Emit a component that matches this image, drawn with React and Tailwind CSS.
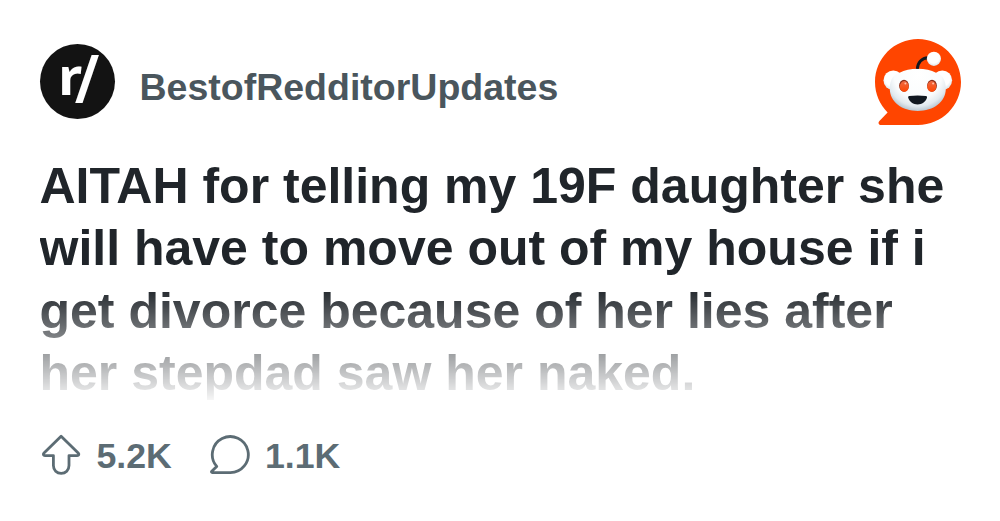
import React from "react";

const post = {
  community: "BestofRedditorUpdates",
  lines: [
    "AITAH for telling my 19F daughter she",
    "will have to move out of my house if i",
    "get divorce because of her lies after",
    "her stepdad saw her naked.",
  ],
  votes: "5.2K",
  comments: "1.1K",
};

const CommunityIcon = () => (
  <svg className="w-[75px] h-[75px] shrink-0 overflow-visible" viewBox="0 0 75 75">
    <circle cx="37.5" cy="37.5" r="37.5" fill="#131313" />
    <g fill="#fff" className="font-['Noto_Sans',sans-serif]">
      <text
        fontSize="50.5"
        fontWeight="700"
        transform="translate(18.2 51) scale(1.06 1)"
      >
        r
      </text>
      <text
        fontSize="67"
        fontWeight="600"
        transform="translate(34.8 58.8) scale(.92 1)"
      >
        /
      </text>
    </g>
  </svg>
);

const RedditLogo = () => (
  <svg className="w-[86px] h-[86px] shrink-0" viewBox="0 0 86 86">
    <defs>
      <radialGradient
        id="head"
        gradientUnits="userSpaceOnUse"
        cx="42.8"
        cy="36"
        r="38"
      >
        <stop offset="0" stopColor="#fff" />
        <stop offset=".62" stopColor="#fafcfd" />
        <stop offset=".82" stopColor="#e2eaef" />
        <stop offset="1" stopColor="#a9b9c5" />
      </radialGradient>
      <radialGradient id="ball" cx=".48" cy=".4" r=".62">
        <stop offset=".65" stopColor="#fff" />
        <stop offset="1" stopColor="#d6e1e7" />
      </radialGradient>
      <linearGradient id="eye" x1="0" y1="0" x2="0" y2="1">
        <stop offset="0" stopColor="#f06a42" />
        <stop offset="1" stopColor="#ff4500" />
      </linearGradient>
    </defs>
    <path
      d="M43 0C66.7 0 86 19.3 86 43S66.7 86 43 86H5.8C3.6 86 2.8 83.6 4.4 82L12.6 73.4C4.8 65.6 0 54.9 0 43 0 19.3 19.3 0 43 0Z"
      fill="#ff4500"
    />
    <circle cx="18.3" cy="41.2" r="9.8" fill="url(#ball)" />
    <circle cx="67.3" cy="41.2" r="9.8" fill="url(#ball)" />
    <path
      d="M42.8 29.8C35.5 29.8 29.5 31.2 24.6 33.8C20 34.5 14.5 40 14.8 49.8C14.8 63 27 72 42.8 72S70.8 63 70.8 49.8C71.1 40 65.6 34.5 61 33.8C56.1 31.2 50.1 29.8 42.8 29.8Z"
      fill="url(#head)"
    />
    <ellipse cx="29" cy="46.8" rx="4.9" ry="6" fill="#8c2d17" />
    <ellipse cx="57" cy="46.8" rx="4.9" ry="6" fill="#8c2d17" />
    <ellipse cx="29.3" cy="47.4" rx="4.5" ry="5.3" fill="url(#eye)" />
    <ellipse cx="56.7" cy="47.4" rx="4.5" ry="5.3" fill="url(#eye)" />
    <circle cx="30.4" cy="44.4" r="1" fill="#ffc0a6" />
    <circle cx="58.1" cy="44.4" r="1" fill="#ffc0a6" />
    <path
      d="M34.2 57Q42.6 56 51 57C52 57.2 52.3 58 51.9 59C50.4 63 47 65.4 42.6 65.4S34.8 63 33.3 59C32.9 58 33.2 57.2 34.2 57Z"
      fill="#111820"
    />
    <path
      d="M42.3 29.9C42.7 23.5 46.8 19 53 18.8"
      fill="none"
      stroke="#111820"
      strokeWidth="2.9"
    />
    <circle cx="58.9" cy="19.8" r="7.1" fill="url(#ball)" />
  </svg>
);

const UpvoteIcon = () => (
  <svg
    className="w-[41px] h-[44px]"
    viewBox="0 0 41 44"
    fill="none"
    stroke="#5c6c74"
    strokeWidth="2.8"
    strokeLinejoin="round"
  >
    <path d="M21.1 2.2L38.2 19C39.4 20.4 38.9 21.6 37.2 21.6H29V31.6C29 36.2 25.6 39.4 21.2 39.4S13.4 36.2 13.4 31.6V21.6H5C3.3 21.6 2.8 20.4 4 19Z" />
  </svg>
);

const CommentIcon = () => (
  <svg
    className="w-[42px] h-[42px]"
    viewBox="0 0 42 42"
    fill="none"
    stroke="#5c6c74"
    strokeWidth="2.8"
    strokeLinejoin="round"
  >
    <path d="M21 37.6H3.4C2.4 37.6 2.2 36.8 2.8 36.2L7.7 31.4A18 18 0 1 1 21 37.6Z" />
  </svg>
);

const App = () => {
  return (
    <div className="w-[1000px] h-[521px] bg-white overflow-hidden pl-[39.5px] pr-[39px] pt-[39px] font-['Liberation_Sans',Arial,sans-serif] font-bold">
      <header className="flex items-center justify-between h-[86px]">
        <div className="flex items-center">
          <div className="pb-[2px]">
            <CommunityIcon />
          </div>
          <span className="ml-[25px] pt-[9px] text-[37.5px] leading-[44px] text-[#4a565d]">
            {post.community}
          </span>
        </div>
        <RedditLogo />
      </header>

      <h1 className="mt-[29.5px] h-[250px] text-[50px] leading-[62.5px] text-[#20252a] whitespace-nowrap [mask-image:linear-gradient(to_bottom,#000_53%,transparent_100%)]">
        {post.lines.map((line) => (
          <span key={line} className="block">
            {line}
          </span>
        ))}
      </h1>

      <footer className="flex items-center mt-[28px] h-[46px] text-[35.7px] leading-[46px] text-[#5c6c74]">
        <UpvoteIcon />
        <span className="ml-[16px] pt-px">{post.votes}</span>
        <div className="flex items-center ml-[37px]">
          <CommentIcon />
          <span className="ml-[14px] pt-px">{post.comments}</span>
        </div>
      </footer>
    </div>
  );
};

export default App;
